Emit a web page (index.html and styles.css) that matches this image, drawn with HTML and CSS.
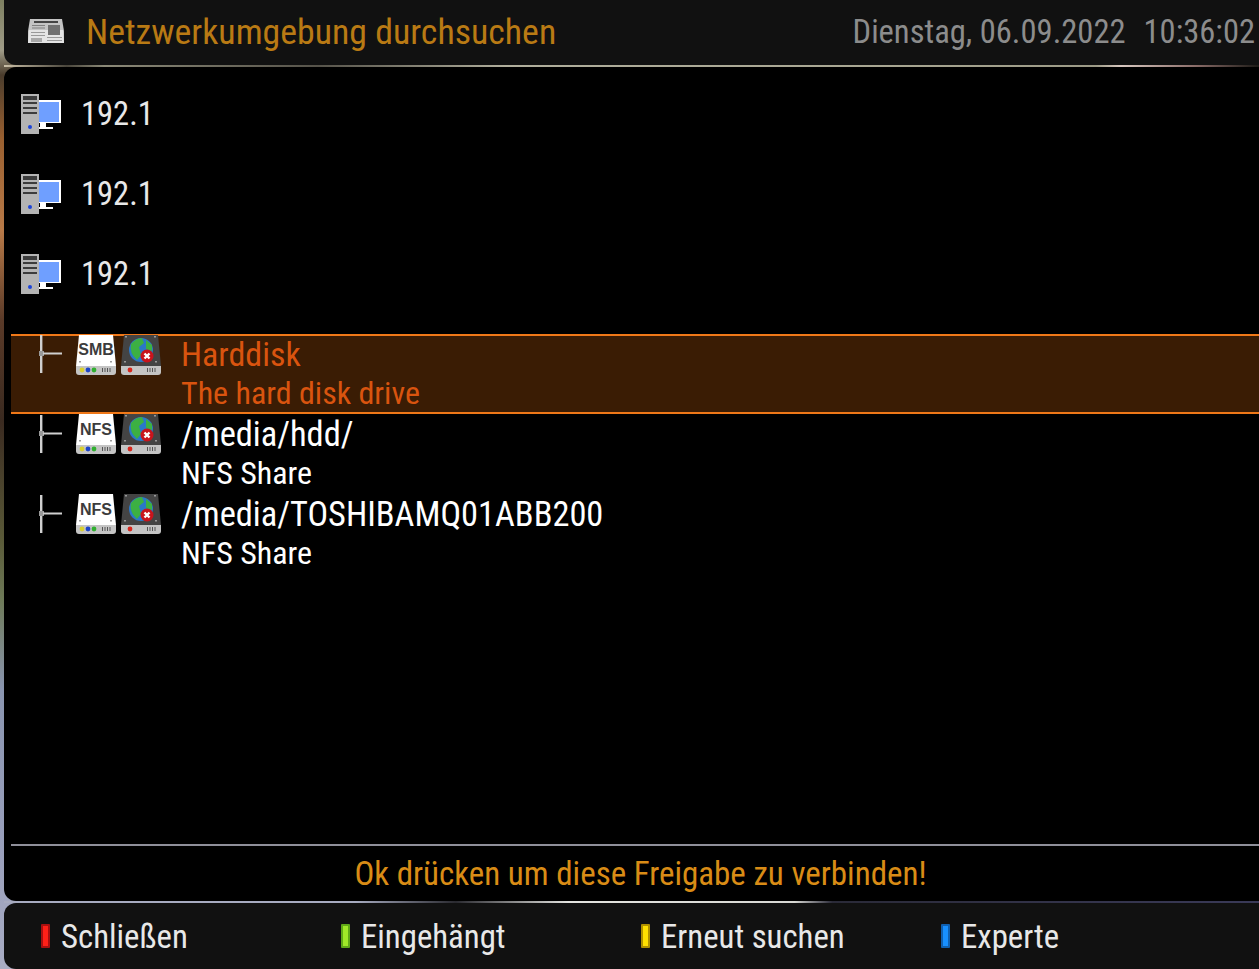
FILE: index.html
```html
<!DOCTYPE html>
<html lang="de">
<head>
    <meta charset="UTF-8">
    <title>Netzwerkumgebung durchsuchen</title>
    <link rel="stylesheet" href="styles.css">
</head>
<body>

<svg class="defs" width="0" height="0">
    <symbol id="host" viewBox="0 0 40 40">
        <rect x="18" y="6" width="22" height="23" fill="#fff"/>
        <rect x="18" y="8" width="20" height="20" fill="#6f9fff"/>
        <rect x="19" y="29" width="6" height="4" fill="#fff"/>
        <rect x="18" y="33" width="14" height="2" fill="#fff"/>
        <rect x="0" y="0" width="18" height="40" fill="#b4b4b4"/>
        <rect x="2" y="2" width="14" height="4" fill="#3c3c3c"/>
        <rect x="2" y="8" width="14" height="2" fill="#3c3c3c"/>
        <rect x="2" y="13" width="14" height="2" fill="#3c3c3c"/>
        <rect x="2" y="18" width="14" height="2" fill="#3c3c3c"/>
        <circle cx="9" cy="33" r="2" fill="#1c44d8"/>
    </symbol>
    <symbol id="tree" viewBox="0 0 26 40">
        <rect x="2" y="0" width="2.4" height="38" fill="#d0d0d0"/>
        <rect x="1" y="16" width="5" height="5" fill="#9a9a9a"/>
        <rect x="5" y="17.5" width="19" height="2" fill="#d0d0d0"/>
    </symbol>
    <symbol id="drive-white" viewBox="0 0 40 40">
        <path d="M3 0H37L40 31H0Z" fill="#fff"/>
        <path d="M0 31H40V37Q40 40 37 40H3Q0 40 0 37Z" fill="#c4c4c4"/>
        <rect x="3" y="26" width="2" height="1.5" fill="#999"/>
        <rect x="34" y="26" width="2" height="1.5" fill="#999"/>
        <circle cx="6" cy="35" r="2.4" fill="#d8d030"/>
        <circle cx="12" cy="35" r="2.4" fill="#1c44c8"/>
        <circle cx="18" cy="35" r="2.4" fill="#30b030"/>
        <path d="M26 33h1v4h-1zM28.5 33h1v4h-1zM31 33h1v4h-1zM33.5 33h1v4h-1z" fill="#555"/>
    </symbol>
    <symbol id="drive-dark" viewBox="0 0 40 40">
        <path d="M3 0H37L40 31H0Z" fill="#444"/>
        <path d="M0 31H40V37Q40 40 37 40H3Q0 40 0 37Z" fill="#c4c4c4"/>
        <rect x="4" y="1" width="2" height="1.5" fill="#999"/>
        <rect x="33" y="1" width="2" height="1.5" fill="#999"/>
        <rect x="3" y="26" width="2" height="1.5" fill="#999"/>
        <rect x="34" y="26" width="2" height="1.5" fill="#999"/>
        <circle cx="9" cy="35" r="2.4" fill="#d8261c"/>
        <path d="M26 33h1v4h-1zM28.5 33h1v4h-1zM31 33h1v4h-1zM33.5 33h1v4h-1z" fill="#555"/>
        <circle cx="20" cy="15" r="12" fill="#2a78c8"/>
        <path d="M10 9Q15 3 21 3L23 8L18 12L20 20L16 25Q8 18 10 9Z" fill="#3cb043"/>
        <path d="M25 5L31 10L31 16L25 14Z" fill="#3cb043"/>
        <circle cx="26" cy="21" r="6.5" fill="#c8141c"/>
        <path d="M23.5 18.5L28.5 23.5M28.5 18.5L23.5 23.5" stroke="#fff" stroke-width="2.4"/>
    </symbol>
</svg>

<div class="screen">
    <header class="topbar">
        <svg class="news-icon" viewBox="0 0 36 25">
            <path d="M2 1H34L36 13V25H0V13Z" fill="#c4c4c4"/>
            <rect x="6" y="3" width="24" height="2" fill="#444"/>
            <path d="M1 12H35L36 25H0Z" fill="#e4e4e4"/>
            <rect x="4" y="7" width="13" height="1" fill="#808080"/>
            <rect x="4" y="9.5" width="13" height="1" fill="#808080"/>
            <rect x="20" y="7" width="12" height="10" fill="#707070"/>
            <rect x="3" y="14" width="14" height="1" fill="#999"/>
            <rect x="3" y="17" width="14" height="1" fill="#999"/>
            <rect x="3" y="20" width="11" height="4" fill="#a8a8a8"/>
            <rect x="19" y="19" width="15" height="1" fill="#999"/>
            <rect x="19" y="22" width="15" height="1" fill="#999"/>
        </svg>
        <h1 class="title">Netzwerkumgebung durchsuchen</h1>
        <div class="clock"><span class="date">Dienstag, 06.09.2022</span><span>10:36:02</span></div>
    </header>
    <div class="gap gap-top"></div>
    <main class="panel">
        <ul class="list">
            <li class="row host"><svg class="icon"><use href="#host"/></svg><span class="name">192.1</span></li>
            <li class="row host"><svg class="icon"><use href="#host"/></svg><span class="name">192.1</span></li>
            <li class="row host"><svg class="icon"><use href="#host"/></svg><span class="name">192.1</span></li>
            <li class="row share selected">
                <svg class="tree"><use href="#tree"/></svg>
                <svg class="icon"><use href="#drive-white"/></svg>
                <span class="badge">SMB</span>
                <svg class="icon"><use href="#drive-dark"/></svg>
                <div class="info"><div class="path">Harddisk</div><div>The hard disk drive</div></div>
            </li>
            <li class="row share">
                <svg class="tree"><use href="#tree"/></svg>
                <svg class="icon"><use href="#drive-white"/></svg>
                <span class="badge">NFS</span>
                <svg class="icon"><use href="#drive-dark"/></svg>
                <div class="info"><div class="path">/media/hdd/</div><div>NFS Share</div></div>
            </li>
            <li class="row share">
                <svg class="tree"><use href="#tree"/></svg>
                <svg class="icon"><use href="#drive-white"/></svg>
                <span class="badge">NFS</span>
                <svg class="icon"><use href="#drive-dark"/></svg>
                <div class="info"><div class="path">/media/TOSHIBAMQ01ABB200</div><div>NFS Share</div></div>
            </li>
        </ul>
        <div class="hint">Ok drücken um diese Freigabe zu verbinden!</div>
    </main>
    <div class="gap gap-bottom"></div>
    <footer class="keys">
        <div class="key"><i class="led red"></i><span>Schließen</span></div>
        <div class="key"><i class="led green"></i><span>Eingehängt</span></div>
        <div class="key"><i class="led yellow"></i><span>Erneut suchen</span></div>
        <div class="key"><i class="led blue"></i><span>Experte</span></div>
    </footer>
</div>

</body>
</html>
```

FILE: styles.css
```css
html, body {
    margin: 0;
    padding: 0;
    height: 100%;
    overflow: hidden;
}
body {
    font-family: Roboto, "Liberation Sans", sans-serif;
    font-stretch: 75%;
    font-size: 32.8px;
    color: #e8e8e8;
    background: linear-gradient(#7d7f60 0, #a09c88 50px, #4a3c2c 75px, #9a6030 140px, #b87a48 230px, #5a3a28 320px, #3a2a20 420px, #5a5a38 540px, #6e7a58 600px, #8a95b0 690px, #9aa0bc 850px, #a9adc4 100%);
}
.defs {
    position: absolute;
}
.screen {
    display: flex;
    flex-direction: column;
    height: 969px;
    padding-left: 4px;
    box-sizing: border-box;
}
.topbar {
    height: 65px;
    flex: none;
    display: flex;
    align-items: center;
    background-color: #111;
    border-bottom-left-radius: 12px;
    padding-right: 4px;
}
.news-icon {
    width: 36px;
    height: 25px;
    margin-left: 24px;
    margin-bottom: 4px;
}
.title {
    font-size: 35.8px;
    font-weight: 400;
    color: #b97a14;
    margin: 0 0 1px 22px;
    flex: 1;
}
.clock {
    display: flex;
    gap: 18px;
    font-size: 32.5px;
    color: #8c8c8c;
    margin-bottom: 1px;
}
.date {
    font-size: 32.6px;
}
.gap {
    height: 2px;
    flex: none;
}
.gap-top {
    background: linear-gradient(90deg, #cbc0a8 0, #4a463c 5%, #8c8a78 8%, #56534a 25%, #b0ae9c 40%, #a8a692 70%, #9c9a86 87%, #d8c8c0 89%, #8a6c68 95%, #1c1a16 100%);
}
.gap-bottom {
    background: linear-gradient(90deg, #a7abc0 0, #a7abc0 28%, #2a2a30 36%, #e4e4e0 45%, #d8d8d4 63%, #2a2a38 66%, #3a3a58 100%);
}
.panel {
    flex: 1;
    display: flex;
    flex-direction: column;
    background-color: #000;
    border-radius: 12px 0 0 12px;
    padding: 7px 0 0 7px;
}
.list {
    list-style: none;
    margin: 0;
    padding: 0;
    flex: 1;
}
.row {
    height: 80px;
    box-sizing: border-box;
    display: flex;
}
.host {
    align-items: center;
    padding-left: 10px;
}
.host .icon {
    width: 40px;
    height: 40px;
}
.host .name {
    margin-left: 20px;
    font-size: 32.5px;
}
.share {
    position: relative;
    color: #fff;
}
.host + .share {
    margin-top: 20px;
}
.tree {
    width: 26px;
    height: 40px;
    margin: 1px 12px 0 27px;
}
.share .icon {
    width: 40px;
    height: 40px;
    margin-right: 5px;
}
.badge {
    position: absolute;
    left: 65px;
    top: 7px;
    width: 40px;
    text-align: center;
    font-family: "Liberation Sans", sans-serif;
    font-stretch: normal;
    font-weight: 700;
    font-size: 16px;
    line-height: 18px;
    color: #3c3c3c;
}
.selected .badge {
    top: 5px;
}
.info {
    margin: 1px 0 0 15px;
    font-size: 32px;
    line-height: 39px;
}
.path {
    font-size: 34.4px;
}
.selected {
    background-color: #3a1c04;
    border-top: 2px solid #f07818;
    border-bottom: 2px solid #f07818;
    color: #d9540f;
}
.selected .path {
    font-size: 34px;
}
.selected .tree,
.selected .icon {
    margin-top: -1px;
}
.selected .info {
    margin-top: -1px;
}
.hint {
    border-top: 2px solid #8f8f9a;
    height: 55px;
    line-height: 55px;
    padding-left: 11px;
    text-align: center;
    font-size: 33px;
    color: #d98c16;
}
.keys {
    height: 66px;
    flex: none;
    display: flex;
    align-items: center;
    background-color: #111;
    border-radius: 12px 0 0 12px;
    padding-left: 37px;
}
.key {
    width: 300px;
    display: flex;
    align-items: center;
}
.key span {
    margin-top: 2px;
}
.led {
    width: 9px;
    height: 24px;
    margin-right: 11px;
    box-sizing: border-box;
    border-radius: 1px;
    border: 2px solid;
}
.red { background-color: #ff2018; border-color: #a81010; }
.green { background-color: #a0e828; border-color: #60a818; }
.yellow { background-color: #ffe000; border-color: #b09000; }
.blue { background-color: #1890ff; border-color: #1060b0; }
```
